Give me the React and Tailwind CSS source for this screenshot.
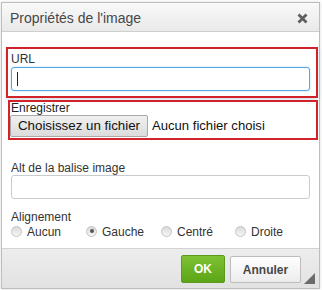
import React from 'react';

const ALIGNS = [
  { label: 'Aucun', checked: false },
  { label: 'Gauche', checked: true },
  { label: 'Centré', checked: false },
  { label: 'Droite', checked: false },
];

function Radio({ checked }) {
  return (
    <span className="w-[11px] h-[11px] rounded-full border border-[#c4c4c4] bg-gradient-to-b from-[#d9d9d9] to-[#f7f7f7] flex items-center justify-center shrink-0">
      {checked && <span className="w-[4px] h-[4px] rounded-full bg-[#555]" />}
    </span>
  );
}

export default function App() {
  return (
    <div className="w-[322px] h-[290px] bg-white pt-[2px] pl-[1px] font-['Liberation_Sans',Arial,sans-serif] text-[#333]">
      <div className="relative w-[319px] border border-[#bdbdbd] shadow-[0_0_3px_rgba(0,0,0,0.15)] bg-white">
        {/* en-tête */}
        <div className="h-[29px] flex items-center justify-between pl-[8px] pr-[11px] bg-gradient-to-b from-[#f9f9f9] to-[#e9e9e9] border-b border-[#cfcfcf]">
          <span className="text-[14px] text-[#474747] leading-none mt-[1px]">Propriétés de l'image</span>
          <svg width="11" height="11" viewBox="0 0 11 11" className="mt-[2px]">
            <path d="M1.5 1.5 L9.5 9.5 M9.5 1.5 L1.5 9.5" stroke="#5f5f5f" strokeWidth="2.8" strokeLinecap="butt" />
          </svg>
        </div>

        <div className="pt-[15px] pb-[10px]">
          <div className="ml-[4px] w-[312px] border-2 border-[#d2222a] pt-[3px] pl-[3px] pb-[5px] shadow-[0_2px_4px_rgba(160,200,215,0.5)]">
            <div className="text-[12px] leading-[14px] text-[#333]">URL</div>
            <div className="mt-[1px] w-[299px] h-[24px] rounded-[3px] border border-[#51a7e8] shadow-[0_0_2px_rgba(81,167,232,0.5)] flex items-center pl-[5px]">
              <span className="w-[1px] h-[14px] bg-[#222]" />
            </div>
          </div>

          <div className="ml-[6px] mt-[2px] w-[310px] border-2 border-[#d2222a] pb-[1px]">
            <div className="pl-[1px] text-[12px] leading-[13px] text-[#222]">Enregistrer</div>
            <div className="flex items-center">
              <span className="w-[138px] h-[22px] border border-[#a9a9a9] rounded-[2px] bg-gradient-to-b from-[#f0f0f0] to-[#dcdcdc] text-[13.3px] text-[#111] flex items-center justify-center">
                Choisissez un fichier
              </span>
              <span className="ml-[4px] text-[13.1px] text-[#111]">Aucun fichier choisi</span>
            </div>
          </div>

          <div className="pl-[9px] mt-[21px]">
            <div className="text-[12px] leading-[14px] text-[#333]">Alt de la balise image</div>
            <div className="w-[299px] h-[24px] rounded-[3px] border border-[#c9cccf] bg-white" />
          </div>

          <div className="pl-[9px] mt-[11px]">
            <div className="text-[12px] leading-[14px] text-[#333]">Alignement</div>
            <div className="grid grid-cols-[75px_75px_74px_75px]">
              {ALIGNS.map(({ label, checked }) => (
                <label key={label} className="flex items-center gap-[5px] h-[14px] text-[12px] leading-[14px] text-[#333]">
                  <Radio checked={checked} />
                  <span className="mt-[1px]">{label}</span>
                </label>
              ))}
            </div>
          </div>
        </div>

        {/* pied */}
        <div className="h-[40px] border-t border-[#d3d3d3] bg-gradient-to-b from-[#ededed] to-[#e2e2e2] flex items-start justify-end pr-[18px] pt-[6px] gap-[5px]">
          <button className="w-[44px] h-[28px] rounded-[2px] border border-[#5b9a1e] bg-gradient-to-b from-[#7ec233] to-[#5ba516] text-white text-[12px] font-bold">
            OK
          </button>
          <button className="mt-[1px] w-[71px] h-[27px] rounded-[2px] border border-[#bcbcbc] bg-gradient-to-b from-white to-[#ececec] text-[#474747] text-[12px] font-bold">
            Annuler
          </button>
        </div>
        <svg width="11" height="11" viewBox="0 0 11 11" className="absolute right-[4px] bottom-[4px]">
          <path d="M11 0 L11 11 L0 11 Z" fill="#6b6b6b" />
        </svg>
      </div>
    </div>
  );
}
